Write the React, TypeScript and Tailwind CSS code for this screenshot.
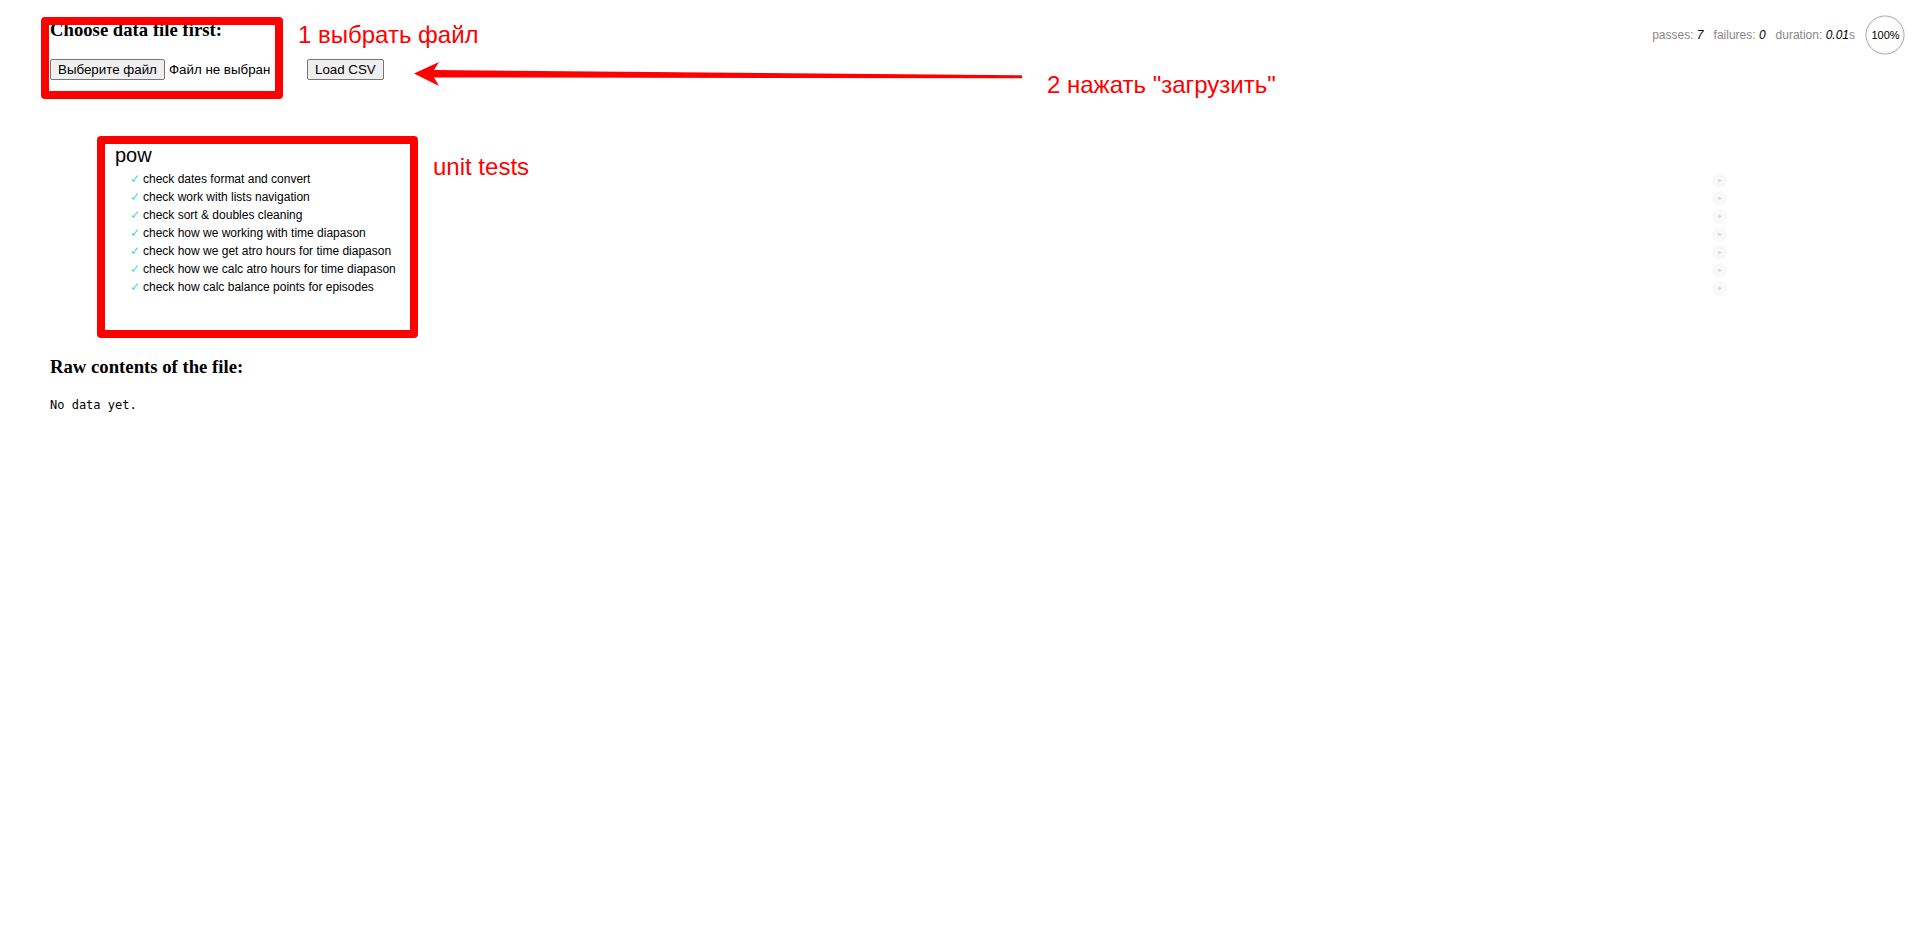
const tests = [
  "check dates format and convert",
  "check work with lists navigation",
  "check sort & doubles cleaning",
  "check how we working with time diapason",
  "check how we get atro hours for time diapason",
  "check how we calc atro hours for time diapason",
  "check how calc balance points for episodes",
];

function Stats() {
  return (
    <ul className="flex items-start pt-[15px] pr-[10px] font-['Liberation_Sans',Arial,sans-serif] text-[12px] leading-[18px] text-[#888]">
      <li className="mx-[5px] pt-[11px]">
        passes: <em className="text-black">7</em>
      </li>
      <li className="mx-[5px] pt-[11px]">
        failures: <em className="text-black">0</em>
      </li>
      <li className="mx-[5px] pt-[11px]">
        duration: <em className="text-black">0.01</em>s
      </li>
      <li className="relative mx-[5px] h-[40px] w-[40px]">
        <svg className="absolute inset-0" width="40" height="40" viewBox="0 0 40 40">
          <circle cx="20" cy="20" r="19" fill="none" stroke="#9f9f9f" strokeWidth="1" />
          <circle cx="20" cy="20" r="18" fill="none" stroke="#eeeeee" strokeWidth="1" />
        </svg>
        <span className="absolute inset-0 flex items-center justify-center pl-[1px] text-[11px] leading-none text-black">
          100%
        </span>
      </li>
    </ul>
  );
}

function TestRow({ title }: { title: string }) {
  return (
    <li className="ml-[15px]">
      <h2 className="relative text-[12px] leading-[18px] font-normal text-black">
        <span className="float-left mr-[5px] w-[8px] font-['DejaVu_Sans',sans-serif] text-[12px] font-light text-[#3fdcc0]">✓</span>
        {title}
        <a className="absolute right-0 top-[3px] block h-[15px] w-[15px] rounded-full bg-[#eee] text-center text-[15px] leading-[15px] text-[#888] opacity-30">
          ‣
        </a>
      </h2>
    </li>
  );
}

export default function App() {
  return (
    <div className="relative min-h-screen bg-white text-black">
      <div className="flex items-start justify-between">
        <div className="pl-[50px] pt-[19px]">
          <h3 className="font-['Liberation_Serif','Times_New_Roman',serif] text-[18.72px] font-bold leading-[22px]">
            Choose data file first:
          </h3>
          <div className="mt-[18px] flex h-[21px] items-center font-['Liberation_Sans',Arial,sans-serif] text-[13.33px]">
            <div className="flex w-[257px] items-center">
              <button className="h-[21px] rounded-[2px] border border-[#767676] bg-[#efefef] px-[7px] leading-none text-black">
                Выберите файл
              </button>
              <span className="ml-[4px]">Файл не выбран</span>
            </div>
            <button className="h-[21px] rounded-[2px] border border-[#767676] bg-[#efefef] px-[7px] leading-none text-black">
              Load CSV
            </button>
          </div>
        </div>
        <Stats />
      </div>

      <div className="ml-[100px] mr-[193px] mt-[60px] font-['Liberation_Sans',Arial,sans-serif]">
        <ul>
          <li className="ml-[15px]">
            <h1 className="text-[20px] font-normal leading-[30px]">pow</h1>
            <ul>
              {tests.map((t) => (
                <TestRow key={t} title={t} />
              ))}
            </ul>
          </li>
        </ul>
      </div>

      <div className="pl-[50px]">
        <h3 className="mt-[60px] font-['Liberation_Serif','Times_New_Roman',serif] text-[18.72px] font-bold leading-[22px]">
          Raw contents of the file:
        </h3>
        <pre className="mt-[20px] font-['DejaVu_Sans_Mono','Liberation_Mono',monospace] text-[12px] leading-[14px]">No data yet.</pre>
      </div>

      {/* annotations drawn over the screenshot */}
      <div className="pointer-events-none absolute left-[41px] top-[17px] h-[82px] w-[242px] rounded-[4px] border-8 border-[#ff0000]" />
      <div className="pointer-events-none absolute left-[97px] top-[136px] h-[202px] w-[321px] rounded-[4px] border-8 border-[#ff0000]" />
      <div className="pointer-events-none absolute left-[298px] top-[23px] whitespace-nowrap font-['Liberation_Sans',Arial,sans-serif] text-[24px] leading-[24px] text-[#ff0000]">
        1 выбрать файл
      </div>
      <div className="pointer-events-none absolute left-[1047px] top-[73px] whitespace-nowrap font-['Liberation_Sans',Arial,sans-serif] text-[24px] leading-[24px] text-[#ff0000]">
        2 нажать "загрузить"
      </div>
      <div className="pointer-events-none absolute left-[433px] top-[155px] whitespace-nowrap font-['Liberation_Sans',Arial,sans-serif] text-[24px] leading-[24px] text-[#ff0000]">
        unit tests
      </div>
      <svg className="pointer-events-none absolute left-0 top-0" width="1100" height="110" viewBox="0 0 1100 110">
        <polygon
          points="414,73.5 439,62 434,70 1022,75.3 1022,78.3 434,77.5 439,86"
          fill="#ff0000"
        />
      </svg>
    </div>
  );
}
